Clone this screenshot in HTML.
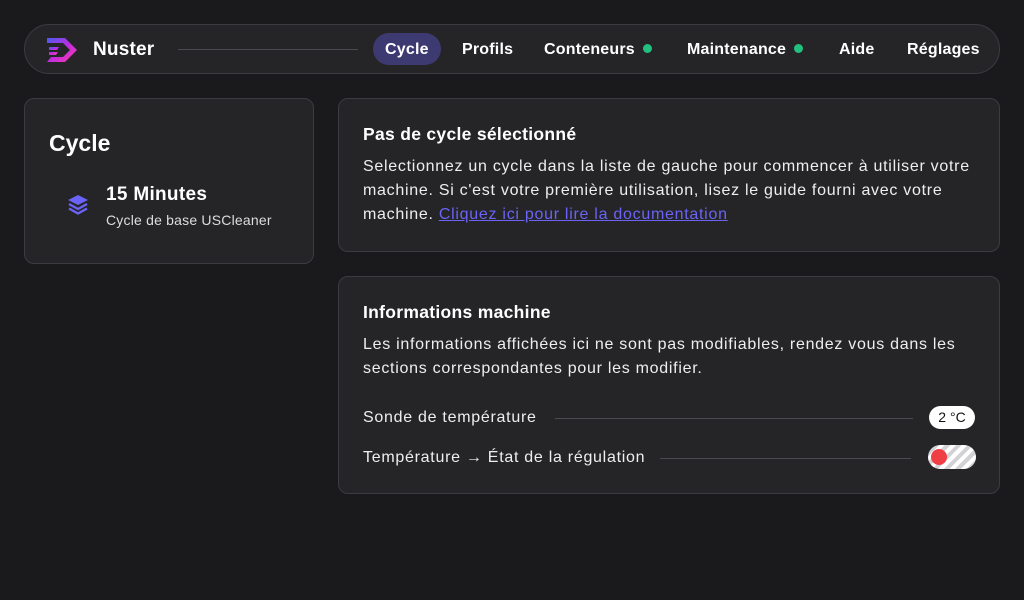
<!DOCTYPE html>
<html><head><meta charset="utf-8"><style>
*{box-sizing:border-box;margin:0;padding:0}
body{width:1024px;height:600px;background:#1a191c;font-family:"Liberation Sans",sans-serif;color:#fff;position:relative;overflow:hidden}
.card{position:absolute;background:#252528;border:1px solid #3c3b42;border-radius:10px}
.nav{left:24px;top:24px;width:976px;height:50px;border-radius:25px}
.nav .t{position:absolute;font-weight:bold;font-size:16px;top:16px;letter-spacing:0.2px}
.dot{display:inline-block;width:9px;height:9px;border-radius:50%;background:#22c07e;margin-left:8px;vertical-align:1px}
.p{font-size:16px;line-height:24px;color:#eee;letter-spacing:0.72px}
.h{font-weight:bold;font-size:18px}
.line{position:absolute;height:1px;background:#4a4a50}
</style></head><body>
<div class="card nav">
<svg style="position:absolute;left:20px;top:11px" width="36" height="28" viewBox="0 0 36 28"><defs><linearGradient id="g" x1="0" y1="0" x2="1" y2="1"><stop offset="0" stop-color="#4a5cf0"/><stop offset=".5" stop-color="#c02ce0"/><stop offset="1" stop-color="#ff3caa"/></linearGradient></defs>
<path d="M2 2h18l12 12-12 12H2l4-5h12l7-7-7-7H2z" fill="url(#g)"/><path d="M4 11h10l-2 3H4zM4 16h9l-2 3H4z" fill="url(#g)"/></svg>
<div class="t" style="left:68px;top:14px;font-size:19px">Nuster</div>
<div class="line" style="left:153px;top:24px;width:180px"></div>
<div style="position:absolute;left:348px;top:8px;width:68px;height:32px;border-radius:16px;background:#3d3a72"></div>
<div class="t" style="left:360px">Cycle</div>
<div class="t" style="left:437px">Profils</div>
<div class="t" style="left:519px">Conteneurs<span class="dot"></span></div>
<div class="t" style="left:662px">Maintenance<span class="dot"></span></div>
<div class="t" style="left:814px">Aide</div>
<div class="t" style="left:882px">Réglages</div>
</div>
<div class="card" style="left:24px;top:98px;width:290px;height:166px">
<div style="position:absolute;left:24px;top:31px;font-weight:bold;font-size:23px">Cycle</div>
<svg style="position:absolute;left:41px;top:95px" width="24" height="22" viewBox="0 0 24 22"><path d="M12 1L22 6 12 11 2 6z" fill="#6a63f5"/><path d="M3 10l9 5 9-5M3 14.5l9 5 9-5" stroke="#6a63f5" stroke-width="2.4" fill="none" stroke-linejoin="round"/></svg>
<div style="position:absolute;left:81px;top:85px;font-weight:bold;font-size:19px;letter-spacing:0.3px">15 Minutes</div>
<div style="position:absolute;left:81px;top:113px;font-size:14px;color:#ddd;letter-spacing:0.2px">Cycle de base USCleaner</div>
</div>
<div class="card" style="left:338px;top:98px;width:662px;height:154px;padding:25px 24px">
<div class="h" style="font-size:17.5px;margin-bottom:10px;letter-spacing:0.3px">Pas de cycle sélectionné</div>
<div class="p">Selectionnez un cycle dans la liste de gauche pour commencer à utiliser votre machine. Si c'est votre première utilisation, lisez le guide fourni avec votre machine. <a style="color:#6a63f5;text-decoration:underline">Cliquez ici pour lire la documentation</a></div>
</div>
<div class="card" style="left:338px;top:276px;width:662px;height:218px;padding:25px 24px">
<div class="h" style="font-size:17.5px;margin-bottom:10px;letter-spacing:0.3px">Informations machine</div>
<div class="p">Les informations affichées ici ne sont pas modifiables, rendez vous dans les sections correspondantes pour les modifier.</div>
<div class="p" style="position:absolute;left:24px;top:129px">Sonde de température</div>
<div class="line" style="left:216px;top:141px;width:358px"></div>
<div style="position:absolute;left:590px;top:129px;width:46px;height:23px;border-radius:12px;background:#fff;color:#111;font-size:14px;text-align:center;line-height:23px">2 °C</div>
<div class="p" style="position:absolute;left:24px;top:169px">Température <b>→</b> État de la régulation</div>
<div class="line" style="left:321px;top:181px;width:251px"></div>
<div style="position:absolute;left:589px;top:168px;width:48px;height:24px;border-radius:12px;background:repeating-linear-gradient(135deg,#fff 0 4px,#d2d2d6 4px 8px)"></div>
<div style="position:absolute;left:592px;top:172px;width:16px;height:16px;border-radius:50%;background:#ef3f45"></div>
</div>
</body></html>
